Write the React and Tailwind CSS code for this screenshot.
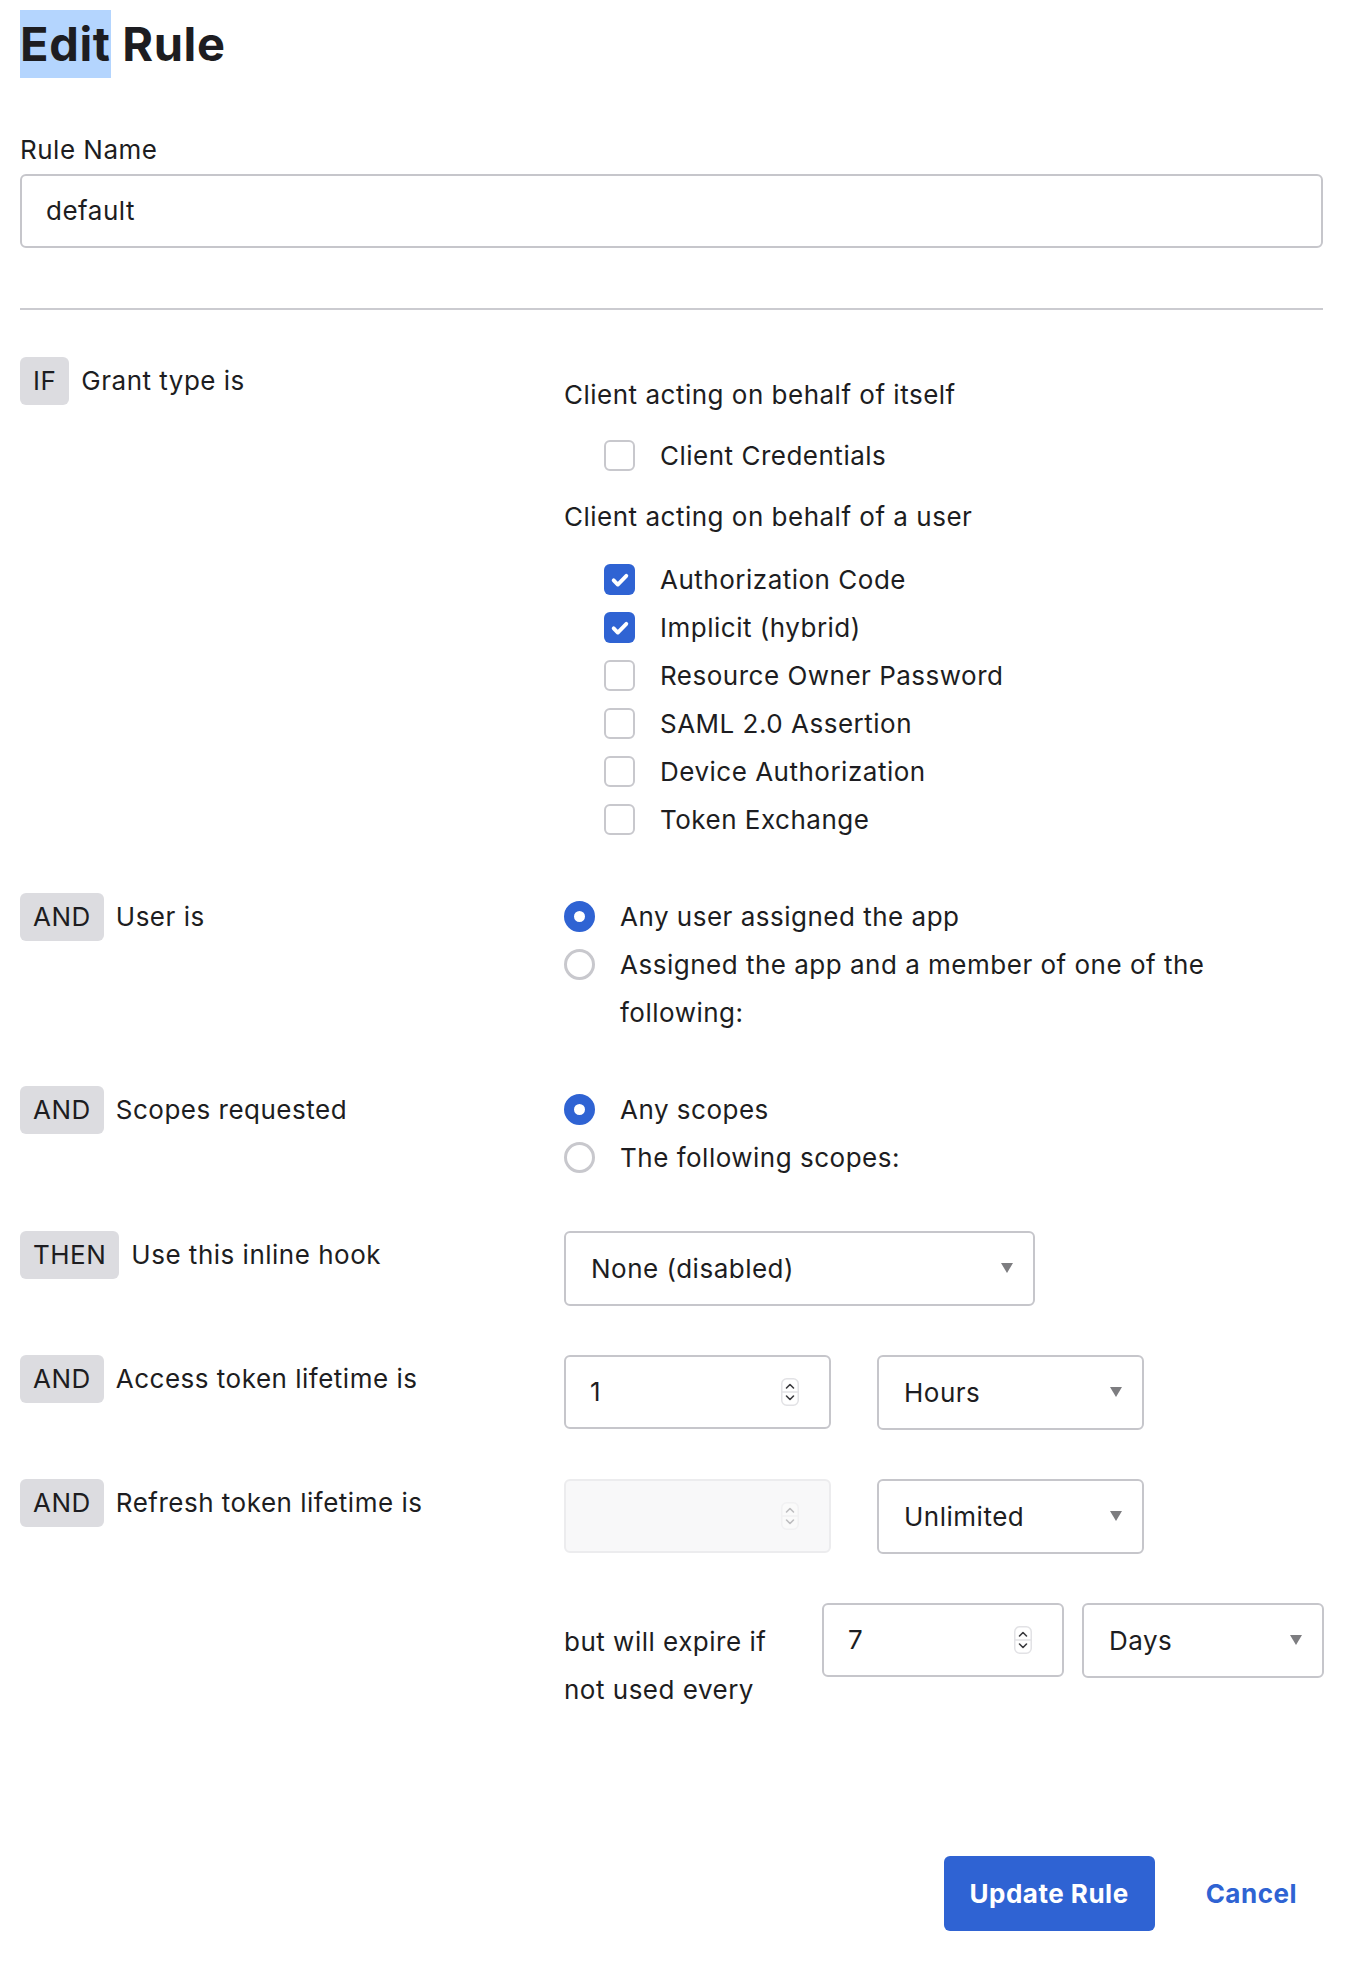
import React from 'react';

const Badge = ({ children }) => (
  <span className="inline-flex h-[48px] items-center rounded-[6px] bg-[#dcdce0] px-[13px]">
    {children}
  </span>
);

const RowLabel = ({ op, text }) => (
  <div className="flex w-[544px] shrink-0 items-start gap-[12px]">
    <Badge>{op}</Badge>
    <span className="leading-[48px]">{text}</span>
  </div>
);

const Checkbox = ({ checked, label }) => (
  <label className="flex h-[48px] items-center gap-[25px] pl-[40px]">
    {checked ? (
      <span className="flex h-[31px] w-[31px] items-center justify-center rounded-[6px] bg-[#2f63d3]">
        <svg viewBox="0 0 16 16" className="h-[22px] w-[22px]" fill="none" stroke="white" strokeWidth="2.8" strokeLinecap="round" strokeLinejoin="round">
          <path d="M3.4 8.3l3 3 6.2-6.3" />
        </svg>
      </span>
    ) : (
      <span className="h-[31px] w-[31px] rounded-[6px] border-[2.5px] border-[#c8c8cd] bg-white" />
    )}
    <span>{label}</span>
  </label>
);

const Radio = ({ checked, children }) => (
  <div className="flex items-start gap-[25px]">
    {checked ? (
      <span className="mt-[8.5px] h-[31px] w-[31px] shrink-0 rounded-full border-[10px] border-[#2f63d3] bg-white" />
    ) : (
      <span className="mt-[8.5px] h-[31px] w-[31px] shrink-0 rounded-full border-[3px] border-[#c8c8cd] bg-white" />
    )}
    <span className="max-w-[610px] leading-[48px]">{children}</span>
  </div>
);

const Arrow = () => (
  <svg viewBox="0 0 12 10" className="h-[10px] w-[12px]">
    <polygon points="0,0 12,0 6,10" fill="#7d7d80" />
  </svg>
);

const Select = ({ value, width }) => (
  <div className={`flex h-[75px] ${width} items-center justify-between rounded-[6px] border-2 border-[#c6c6cb] bg-white pl-[25px] pr-[20px]`}>
    <span>{value}</span>
    <Arrow />
  </div>
);

const Spinner = ({ faded }) => (
  <svg viewBox="0 0 18 28" className={`h-[28px] w-[18px] ${faded ? 'opacity-30' : ''}`}>
    <rect x="0.75" y="0.75" width="16.5" height="26.5" rx="5" fill="white" stroke="#e2e2e5" strokeWidth="1.5" />
    <line x1="1" y1="14" x2="17" y2="14" stroke="#e2e2e5" strokeWidth="1.5" />
    <path d="M5.5 10l3.5-3.5 3.5 3.5" fill="none" stroke="#3a3a3e" strokeWidth="1.6" strokeLinecap="round" strokeLinejoin="round" />
    <path d="M5.5 18l3.5 3.5 3.5-3.5" fill="none" stroke="#3a3a3e" strokeWidth="1.6" strokeLinecap="round" strokeLinejoin="round" />
  </svg>
);

const NumberInput = ({ value, width, disabled }) => (
  <div
    className={`flex h-[74px] ${width} items-center justify-between rounded-[6px] border-2 pl-[24px] pr-[30px] ${
      disabled ? 'border-[#ececee] bg-[#f8f8f9]' : 'border-[#c6c6cb] bg-white'
    }`}
  >
    <span>{value}</span>
    <Spinner faded={disabled} />
  </div>
);

const App = () => {
  return (
    <div className="min-h-[1972px] bg-white pl-[20px] pr-[27px] pt-[9px] text-[26px] tracking-[0.5px] text-[#1d1d21] font-['Inter','Liberation_Sans',sans-serif]">
      <h1 className="text-[47px] font-bold tracking-[0.6px]">
        <span className="inline-block h-[68px] bg-[#b4d5fe] leading-[68px]">Edit</span>
        <span className="leading-[68px]"> Rule</span>
      </h1>

      <div className="mt-[52px] leading-[36px]">Rule Name</div>
      <div className="mt-[6px] flex h-[74px] items-center rounded-[6px] border-2 border-[#c6c6cb] px-[24px]">
        default
      </div>

      <div className="mt-[60px] h-[2px] bg-[#cbcbd0]" />

      <div className="mt-[47px] flex flex-col gap-[49px]">
        {/* IF grant type */}
        <div className="flex">
          <RowLabel op="IF" text="Grant type is" />
          <div className="flex flex-col pt-[14px]">
            <div className="leading-[48px]">Client acting on behalf of itself</div>
            <div className="mt-[13px]">
              <Checkbox label="Client Credentials" />
            </div>
            <div className="mt-[13px] leading-[48px]">Client acting on behalf of a user</div>
            <div className="mt-[15px] flex flex-col">
              <Checkbox checked label="Authorization Code" />
              <Checkbox checked label="Implicit (hybrid)" />
              <Checkbox label="Resource Owner Password" />
              <Checkbox label="SAML 2.0 Assertion" />
              <Checkbox label="Device Authorization" />
              <Checkbox label="Token Exchange" />
            </div>
          </div>
        </div>

        {/* AND user */}
        <div className="flex">
          <RowLabel op="AND" text="User is" />
          <div className="flex flex-col">
            <Radio checked>Any user assigned the app</Radio>
            <Radio>Assigned the app and a member of one of the following:</Radio>
          </div>
        </div>

        {/* AND scopes */}
        <div className="flex">
          <RowLabel op="AND" text="Scopes requested" />
          <div className="flex flex-col">
            <Radio checked>Any scopes</Radio>
            <Radio>The following scopes:</Radio>
          </div>
        </div>

        {/* THEN hook */}
        <div className="flex">
          <RowLabel op="THEN" text="Use this inline hook" />
          <Select value="None (disabled)" width="w-[471px]" />
        </div>

        {/* access token */}
        <div className="flex">
          <RowLabel op="AND" text="Access token lifetime is" />
          <div className="flex gap-[46px]">
            <NumberInput value="1" width="w-[267px]" />
            <Select value="Hours" width="w-[267px]" />
          </div>
        </div>

        {/* refresh token */}
        <div className="flex">
          <RowLabel op="AND" text="Refresh token lifetime is" />
          <div className="flex gap-[46px]">
            <NumberInput value="" width="w-[267px]" disabled />
            <Select value="Unlimited" width="w-[267px]" />
          </div>
        </div>

        <div className="flex">
          <div className="w-[544px] shrink-0" />
          <div className="flex items-start gap-[18px]">
            <div className="w-[240px] pt-[15px] leading-[48px]">
              but will expire if
              <br />
              not used every
            </div>
            <NumberInput value="7" width="w-[242px]" />
            <Select value="Days" width="w-[242px]" />
          </div>
        </div>
      </div>

      <div className="mt-[142px] flex justify-end gap-[25px]">
        <button className="h-[75px] rounded-[6px] bg-[#2f63d3] px-[26px] font-bold text-white">Update Rule</button>
        <button className="h-[75px] px-[26px] font-bold text-[#2f63d3]">Cancel</button>
      </div>
    </div>
  );
};

export default App;
